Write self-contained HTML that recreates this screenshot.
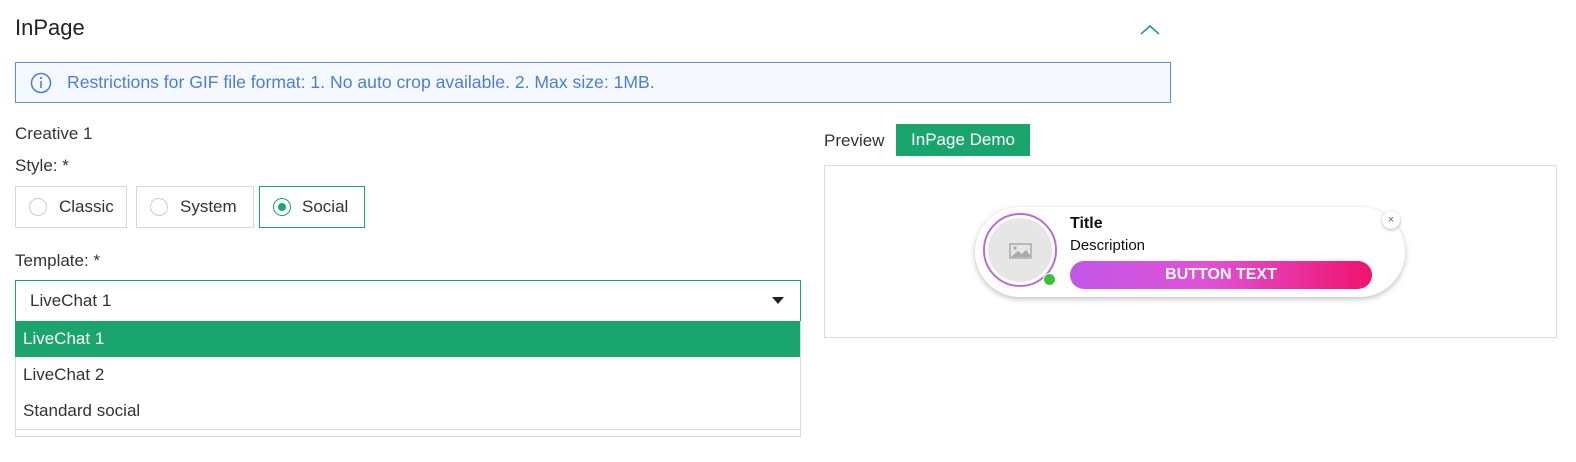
<!DOCTYPE html>
<html><head><style>
body{margin:0;width:1576px;height:462px;background:#fff;font-family:"Liberation Sans",sans-serif;color:#333;position:relative;overflow:hidden}
.a{position:absolute}
.rb{position:absolute;top:186px;height:42px;border:1px solid #d9d9d9;box-sizing:border-box;font-size:17px;line-height:40px;color:#333}
.rb i{position:absolute;left:13px;top:11px;width:18px;height:18px;border:1px solid #ccc;border-radius:50%;box-sizing:border-box}
.opt{position:absolute;left:15px;width:785px;height:36px;line-height:36px;font-size:17px;padding-left:8px;box-sizing:border-box}
</style></head><body>
<div class="a" style="left:15px;top:15px;font-size:22px;color:#222">InPage</div>
<svg class="a" style="left:1140px;top:24px" width="20" height="12"><path d="M1 10 L10 2 L19 10" fill="none" stroke="#1ba56e" stroke-width="1.6"/></svg>
<div class="a" style="left:15px;top:62px;width:1156px;height:41px;border:1px solid #5b8fd9;background:#f5f9ff;box-sizing:border-box"></div>
<svg class="a" style="left:30px;top:72px" width="22" height="22"><circle cx="11" cy="11" r="9.5" fill="none" stroke="#4a7fd4" stroke-width="1.5"/><line x1="11" y1="9" x2="11" y2="16" stroke="#4a7fd4" stroke-width="1.6"/><circle cx="11" cy="6" r="1.1" fill="#4a7fd4"/></svg>
<div class="a" style="left:67px;top:72px;font-size:17.6px;color:#4a7fd4">Restrictions for GIF file format: 1. No auto crop available. 2. Max size: 1MB.</div>
<div class="a" style="left:15px;top:124px;font-size:17px">Creative 1</div>
<div class="a" style="left:15px;top:156px;font-size:17px">Style: *</div>
<div class="rb" style="left:15px;width:112px"><i></i><span style="margin-left:43px">Classic</span></div>
<div class="rb" style="left:136px;width:118px"><i></i><span style="margin-left:43px">System</span></div>
<div class="rb" style="left:259px;width:106px;border-color:#1ba56e"><i style="border-color:#1ba56e"><b style="position:absolute;left:4px;top:4px;width:8px;height:8px;border-radius:50%;background:#1ba56e"></b></i><span style="margin-left:42px">Social</span></div>
<div class="a" style="left:15px;top:251px;font-size:17px">Template: *</div>
<div class="a" style="left:15px;top:280px;width:786px;height:42px;border:1px solid #1ba56e;box-sizing:border-box;font-size:17px;line-height:40px;padding-left:14px">LiveChat 1</div>
<div class="a" style="left:772px;top:297px;width:0;height:0;border-left:6px solid transparent;border-right:6px solid transparent;border-top:7px solid #222"></div>
<div class="a" style="left:15px;top:321px;width:786px;height:116px;border:1px solid #ddd;border-top:0;box-sizing:border-box"></div>
<div class="a" style="left:15px;top:429px;width:786px;border-top:1px solid #ddd"></div>
<div class="opt" style="top:321px;background:#1ba56e;color:#fff">LiveChat 1</div>
<div class="opt" style="top:357px">LiveChat 2</div>
<div class="opt" style="top:393px">Standard social</div>
<div class="a" style="left:824px;top:131px;font-size:17px">Preview</div>
<div class="a" style="left:896px;top:124px;width:134px;height:32px;background:#1ba56e;color:#fff;font-size:17px;line-height:32px;text-align:center">InPage Demo</div>
<div class="a" style="left:824px;top:165px;width:733px;height:173px;border:1px solid #ddd;box-sizing:border-box"></div>
<div class="a" style="left:975px;top:207px;width:430px;height:90px;border-radius:45px;background:#fff;box-shadow:0 2px 6px rgba(0,0,0,.25)"></div>
<div class="a" style="left:983px;top:213px;width:74px;height:74px;border:2px solid #b56fd0;border-radius:50%;box-sizing:border-box"></div>
<div class="a" style="left:988px;top:218px;width:64px;height:64px;border-radius:50%;background:#e6e6e6"></div>
<svg class="a" style="left:1009px;top:243px" width="24" height="16"><rect x="1" y="1" width="21" height="14" fill="none" stroke="#aaa" stroke-width="1.5"/><circle cx="6" cy="5" r="1.6" fill="#aaa"/><path d="M2 14 L9 8 L13 11 L17 7 L21 12 L21 14Z" fill="#aaa"/></svg>
<div class="a" style="left:1043px;top:273px;width:11px;height:11px;border-radius:50%;background:#3cbf3c;border:1px solid #fff"></div>
<div class="a" style="left:1070px;top:215px;font-size:16px;font-weight:bold;color:#111">Title</div>
<div class="a" style="left:1070px;top:237px;font-size:15px;color:#111">Description</div>
<div class="a" style="left:1070px;top:261px;width:302px;height:28px;border-radius:14px;background:linear-gradient(90deg,#c057e5,#e052d8 45%,#f0136c);color:#fff;font-weight:bold;font-size:16px;line-height:28px;text-align:center">BUTTON TEXT</div>
<div class="a" style="left:1382px;top:211px;width:18px;height:18px;border-radius:50%;background:#fff;box-shadow:0 1px 3px rgba(0,0,0,.3);font-size:11px;line-height:18px;text-align:center;color:#666">×</div>
</body></html>
